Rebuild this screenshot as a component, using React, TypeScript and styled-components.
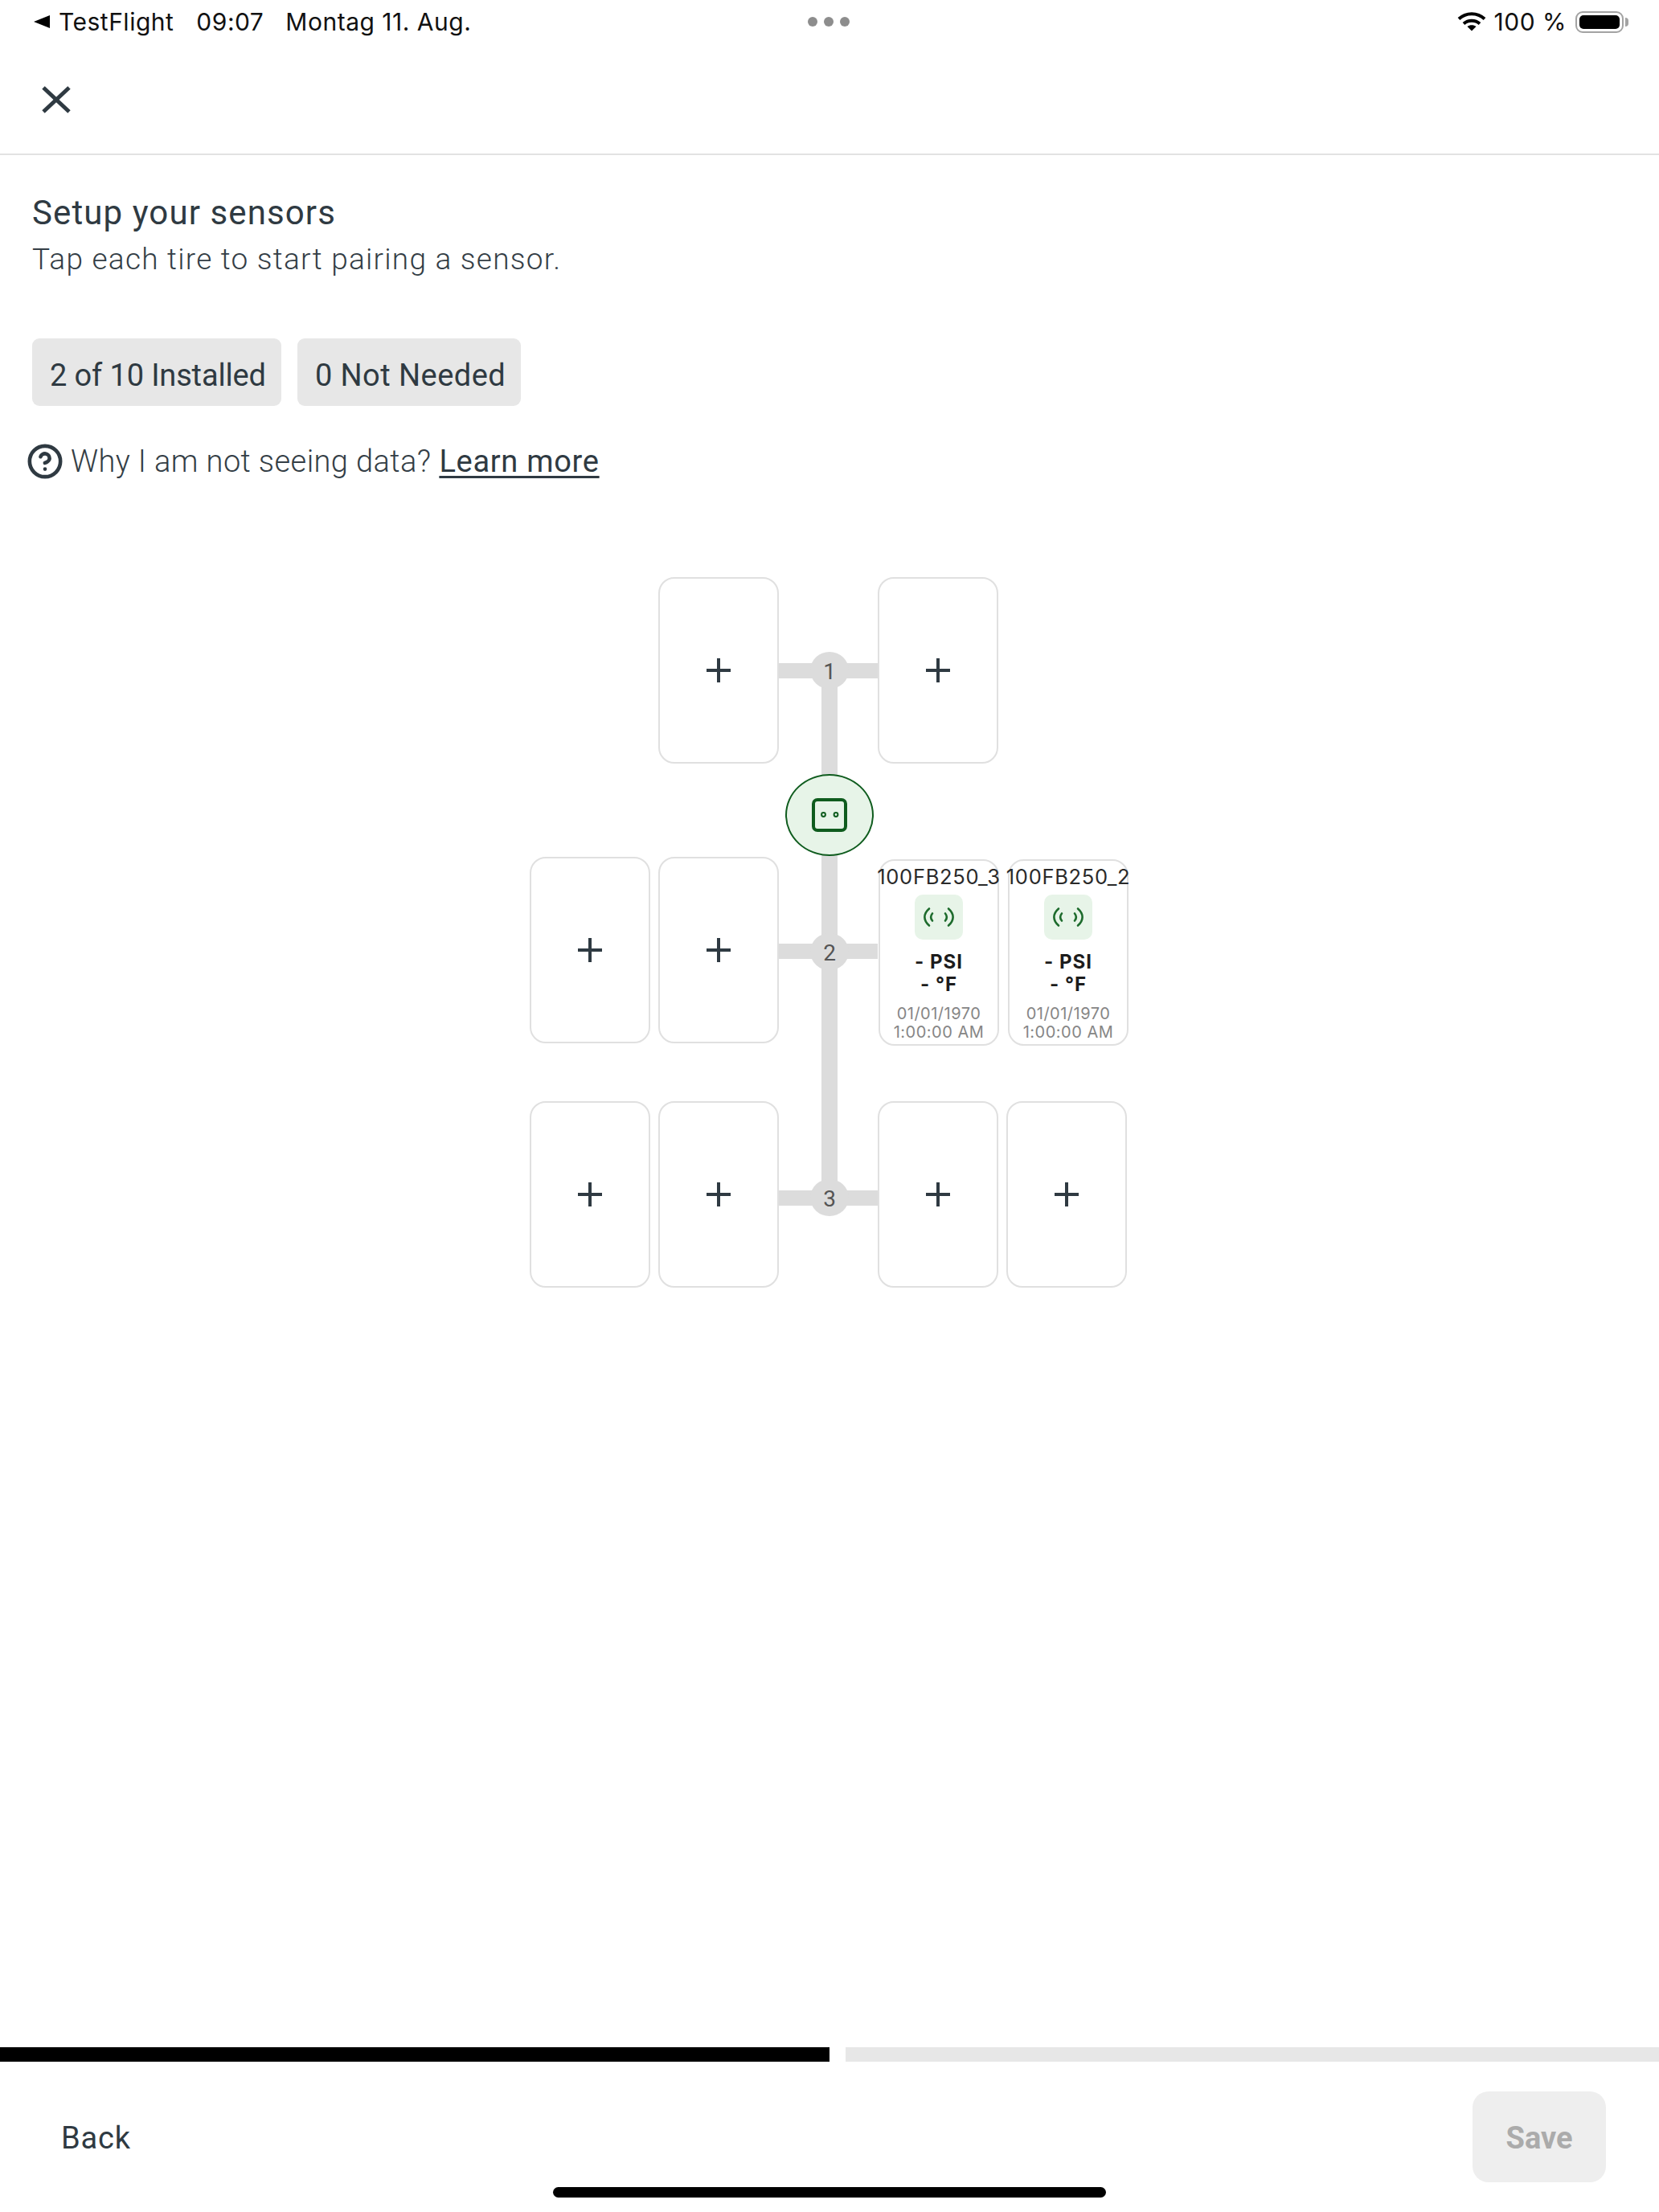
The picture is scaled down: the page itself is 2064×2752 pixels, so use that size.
import React from 'react';
import { CircleHelp } from 'lucide-react';
import styled, { createGlobalStyle } from 'styled-components';

const GlobalStyle = createGlobalStyle`
  html, body {
    margin: 0;
    padding: 0;
    background: #fff;
    font-family: Roboto, "Liberation Sans", sans-serif;
  }
  * { box-sizing: border-box; }
`;

const Page = styled.div`
  width: 2064px;
  height: 2752px;
  display: flex;
  flex-direction: column;
  overflow: hidden;
  background: #fff;
  color: #2f3a42;
`;

const StatusBar = styled.div`
  height: 54px;
  display: grid;
  grid-template-columns: 1fr auto 1fr;
  align-items: center;
  padding: 0 44px 0 42px;
  color: #111;
  font-family: Inter, sans-serif;
  font-size: 30px;
  letter-spacing: 0.5px;
`;

const StatusLeft = styled.div`
  display: flex;
  align-items: center;
`;

const StatusRight = styled.div`
  display: flex;
  align-items: center;
  justify-content: flex-end;
`;

const StatusText = styled.span<{ $left?: number }>`
  margin-left: ${({ $left }) => $left ?? 0}px;
  white-space: nowrap;
`;

const Dots = styled.div`
  display: flex;
  gap: 8px;
`;

const Dot = styled.span`
  width: 12px;
  height: 12px;
  border-radius: 50%;
  background: #8d8d8d;
`;

const Battery = styled.div`
  width: 60px;
  height: 27px;
  margin-left: 11px;
  padding: 3px;
  border: 2px solid #a3a3a3;
  border-radius: 9px;
  position: relative;
  &::before {
    content: '';
    display: block;
    height: 100%;
    border-radius: 5px;
    background: #000;
  }
  &::after {
    content: '';
    position: absolute;
    right: -8px;
    top: 6px;
    width: 4px;
    height: 11px;
    border-radius: 0 4px 4px 0;
    background: #a3a3a3;
  }
`;

const Header = styled.div`
  height: 139px;
  display: flex;
  align-items: center;
  padding: 2px 0 0 52px;
  border-bottom: 2px solid #e2e2e2;
`;

const Intro = styled.div`
  padding: 47px 40px 0;
`;

const Title = styled.h1`
  margin: 0;
  font-size: 42px;
  line-height: 50px;
  font-weight: 400;
  letter-spacing: 1.1px;
`;

const Subtitle = styled.p`
  margin: 8px 0 0;
  font-size: 37px;
  line-height: 50px;
  font-weight: 300;
  color: #343e46;
  letter-spacing: 1.25px;
`;

const Chips = styled.div`
  display: flex;
  gap: 20px;
  margin-top: 73px;
`;

const Chip = styled.div<{ $width: number; $spacing: number }>`
  width: ${({ $width }) => $width}px;
  height: 84px;
  display: flex;
  align-items: center;
  justify-content: center;
  padding: 8px 0 0 3px;
  border-radius: 9px;
  background: #e7e7e7;
  font-size: 38px;
  letter-spacing: ${({ $spacing }) => $spacing}px;
`;

const HelpRow = styled.div`
  display: flex;
  align-items: center;
  gap: 9px;
  margin: 45px 0 0 -7px;
  height: 48px;
  font-size: 38px;
  font-weight: 300;
  letter-spacing: 0.4px;
  color: #343e46;
`;

const LearnMore = styled.a`
  margin-left: 1px;
  font-weight: 400;
  letter-spacing: 0.7px;
  color: #2f3a42;
  text-decoration: underline;
  text-underline-offset: 5px;
  text-decoration-thickness: 3px;
`;

const Diagram = styled.div`
  position: relative;
  width: 743px;
  margin: 120px 0 0 659px;
  display: flex;
  flex-direction: column;
  &::before {
    content: '';
    position: absolute;
    top: 116px;
    bottom: 111px;
    left: 363px;
    width: 20px;
    background: #dcdcdc;
  }
`;

const AxleRow = styled.div<{ $top?: number }>`
  position: relative;
  height: 232px;
  margin-top: ${({ $top }) => $top ?? 0}px;
  display: grid;
  grid-template-columns: 310px 123px 310px;
`;

const Side = styled.div<{ $align: 'start' | 'end' }>`
  display: flex;
  gap: 10px;
  justify-content: flex-${({ $align }) => $align};
`;

const Hub = styled.div<{ $drop?: number }>`
  display: flex;
  align-items: center;
  padding-top: ${({ $drop }) => $drop ?? 0}px;
`;

const AxleBar = styled.div`
  width: 100%;
  height: 19px;
  display: flex;
  align-items: center;
  justify-content: center;
  padding-left: 3px;
  background: #dcdcdc;
`;

const AxleNumber = styled.div`
  flex: none;
  width: 48px;
  height: 46px;
  display: flex;
  align-items: center;
  justify-content: center;
  padding-top: 3px;
  border-radius: 50%;
  background: #dcdcdc;
  color: #555;
  font-size: 28px;
  font-weight: 400;
`;

const TireSlot = styled.button`
  width: 150px;
  height: 232px;
  display: flex;
  align-items: center;
  justify-content: center;
  padding: 0;
  border: 2.5px solid #e0e0e0;
  border-radius: 20px;
  background: #fff;
`;

const EcuRow = styled.div`
  position: relative;
  height: 116px;
  padding: 13px 0 1px 318px;
`;

const Ecu = styled.div`
  width: 110px;
  height: 102px;
  display: flex;
  align-items: center;
  justify-content: center;
  border: 2px solid #0f5c1e;
  border-radius: 50%;
  background: #e7f4e8;
`;

const SensorCards = styled.div`
  display: flex;
  gap: 11px;
  margin: 3px 0 0 1px;
`;

const SensorCard = styled.div`
  width: 150px;
  height: 232px;
  display: flex;
  flex-direction: column;
  align-items: center;
  padding-top: 8px;
  border: 2.5px solid #e0e0e0;
  border-radius: 20px;
  background: #fff;
  font-family: Inter, sans-serif;
`;

const SensorName = styled.div`
  height: 24px;
  font-size: 25.5px;
  line-height: 24px;
  letter-spacing: 0.7px;
  color: #2a2a2a;
  white-space: nowrap;
`;

const SignalBox = styled.div`
  width: 60px;
  height: 56px;
  margin-top: 10px;
  display: flex;
  align-items: center;
  justify-content: center;
  border-radius: 10px;
  background: #e7f4e8;
`;

const Reading = styled.div`
  margin-top: 14px;
  font-size: 24px;
  line-height: 28px;
  font-weight: 700;
  letter-spacing: 1px;
  color: #1c1c1c;
  text-align: center;
`;

const Stamp = styled.div`
  margin-top: 11px;
  font-size: 20px;
  line-height: 23px;
  letter-spacing: 0.5px;
  color: #868686;
  text-align: center;
  white-space: nowrap;
`;

const Spacer = styled.div`
  flex: 1;
`;

const Progress = styled.div`
  display: grid;
  grid-template-columns: 1032px 1fr;
  gap: 20px;
  height: 18px;
`;

const ProgressStep = styled.div<{ $done?: boolean }>`
  background: ${({ $done }) => ($done ? '#000' : '#e7e7e7')};
`;

const Footer = styled.div`
  height: 113px;
  margin-top: 37px;
  display: flex;
  align-items: center;
  justify-content: space-between;
  padding: 0 66px 0 76px;
`;

const BackButton = styled.button`
  padding: 2px 0 0;
  border: 0;
  background: none;
  color: #2f3a42;
  font-family: inherit;
  font-size: 38px;
  letter-spacing: 0.8px;
`;

const SaveButton = styled.button`
  width: 166px;
  height: 113px;
  padding: 2px 0 0;
  border: 0;
  border-radius: 20px;
  background: #eeeeee;
  color: #ababab;
  font-family: inherit;
  font-size: 38px;
  font-weight: 700;
`;

const HomeIndicator = styled.div`
  width: 688px;
  height: 13px;
  margin: 6px auto 18px;
  border-radius: 7px;
  background: #000;
`;

const Plus = () => (
  <svg width="30" height="30" viewBox="0 0 30 30" fill="none" stroke="#2f3a42" strokeWidth="4">
    <path d="M15 0v30M0 15h30" />
  </svg>
);

const Signal = () => (
  <svg width="40" height="26" viewBox="0 0 40 26" fill="none" stroke="#1d6b2c" strokeWidth="2.6" strokeLinecap="round">
    <path d="M8 2.5C0.5 9 0.5 17 8 23.5" />
    <path d="M32 2.5C39.5 9 39.5 17 32 23.5" />
    <path d="M12 8.5C9.5 11.5 9.5 14.5 12 17.5" />
    <path d="M28 8.5C30.5 11.5 30.5 14.5 28 17.5" />
  </svg>
);

type Tire = { name: string } | null;

const axles: { number: number; left: Tire[]; right: Tire[]; top?: number; drop?: number }[] = [
  { number: 1, left: [null], right: [null] },
  {
    number: 2,
    left: [null, null],
    right: [{ name: '100FB250_3' }, { name: '100FB250_2' }],
  },
  { number: 3, left: [null, null], right: [null, null], top: 72, drop: 8 },
];

const renderTires = (tires: Tire[]) =>
  tires.every((tire) => tire) ? (
    <SensorCards>
      {tires.map((tire) => (
        <SensorCard key={tire?.name}>
          <SensorName>{tire?.name}</SensorName>
          <SignalBox>
            <Signal />
          </SignalBox>
          <Reading>
            - PSI
            <br />- °F
          </Reading>
          <Stamp>
            01/01/1970
            <br />
            1:00:00 AM
          </Stamp>
        </SensorCard>
      ))}
    </SensorCards>
  ) : (
    tires.map((_, index) => (
      <TireSlot key={index}>
        <Plus />
      </TireSlot>
    ))
  );

const App: React.FC = () => (
  <Page>
    <GlobalStyle />
    <StatusBar>
      <StatusLeft>
        <svg width="20" height="16" viewBox="0 0 20 16">
          <path d="M20 0v16L0 8z" fill="#000" />
        </svg>
        <StatusText $left={11}>TestFlight</StatusText>
        <StatusText $left={28}>09:07</StatusText>
        <StatusText $left={27}>Montag 11. Aug.</StatusText>
      </StatusLeft>
      <Dots>
        <Dot />
        <Dot />
        <Dot />
      </Dots>
      <StatusRight>
        <svg width="36" height="24" viewBox="0 0 36 24" fill="none" stroke="#000" strokeWidth="4">
          <path d="M2 8.5C11 0 25 0 34 8.5" />
          <path d="M8 14.5C13.5 9.5 22.5 9.5 28 14.5" />
          <path d="M18 23.5l-5.5-5.5C15.5 15.5 20.5 15.5 23.5 18z" fill="#000" stroke="none" />
        </svg>
        <StatusText $left={10}>100 %</StatusText>
        <Battery />
      </StatusRight>
    </StatusBar>
    <Header>
      <svg width="36" height="36" viewBox="0 0 36 36" fill="none" stroke="#2f3a42" strokeWidth="5">
        <path d="M2 3l32 30M34 3L2 33" />
      </svg>
    </Header>
    <Intro>
      <Title>Setup your sensors</Title>
      <Subtitle>Tap each tire to start pairing a sensor.</Subtitle>
      <Chips>
        <Chip $width={310} $spacing={-0.15}>2 of 10 Installed</Chip>
        <Chip $width={278} $spacing={0.45}>0 Not Needed</Chip>
      </Chips>
      <HelpRow>
        <CircleHelp size={46} strokeWidth={2.4} color="#2f3a42" />
        Why I am not seeing data?
        <LearnMore>Learn more</LearnMore>
      </HelpRow>
    </Intro>
    <Diagram>
      {axles.map((axle, index) => (
        <React.Fragment key={axle.number}>
          <AxleRow $top={axle.top}>
            <Side $align="end">{renderTires(axle.left)}</Side>
            <Hub $drop={axle.drop}>
              <AxleBar>
                <AxleNumber>{axle.number}</AxleNumber>
              </AxleBar>
            </Hub>
            <Side $align="start">{renderTires(axle.right)}</Side>
          </AxleRow>
          {index === 0 && (
            <EcuRow>
              <Ecu>
                <svg width="44" height="42" viewBox="0 0 44 42" fill="none" stroke="#0f5c1e">
                  <rect x="2" y="2" width="40" height="38" rx="5" strokeWidth="4" />
                  <circle cx="14.5" cy="20.5" r="2.4" strokeWidth="2" />
                  <circle cx="30" cy="20.5" r="2.4" strokeWidth="2" />
                </svg>
              </Ecu>
            </EcuRow>
          )}
        </React.Fragment>
      ))}
    </Diagram>
    <Spacer />
    <Progress>
      <ProgressStep $done />
      <ProgressStep />
    </Progress>
    <Footer>
      <BackButton>Back</BackButton>
      <SaveButton>Save</SaveButton>
    </Footer>
    <HomeIndicator />
  </Page>
);

export default App;
